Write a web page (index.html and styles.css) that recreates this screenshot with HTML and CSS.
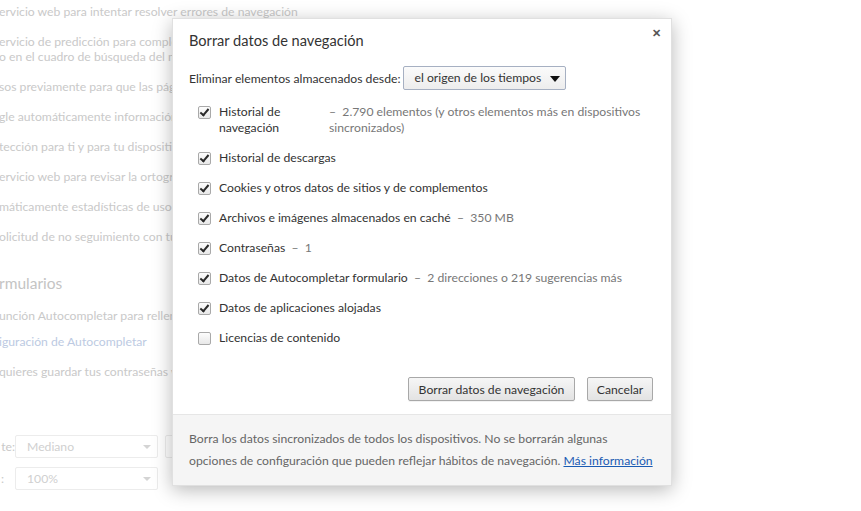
FILE: index.html
```html
<!DOCTYPE html>
<html lang="es">
<head>
    <meta charset="UTF-8">
    <title>Borrar datos de navegación</title>
    <link rel="stylesheet" href="styles.css">
</head>
<body>

    <!-- settings page behind the dialog -->
    <div class="page">
        <div class="item open">ervicio web para intentar resolver errores de navegación</div>
        <div class="item">ervicio de predicción para completar búsquedas y URL escritas<br>o en el cuadro de búsqueda del menú de aplicaciones</div>
        <div class="item">sos previamente para que las páginas se carguen más rápido</div>
        <div class="item">gle automáticamente información de posibles incidentes de seguridad</div>
        <div class="item">tección para ti y para tu dispositivo frente a sitios peligrosos</div>
        <div class="item">ervicio web para revisar la ortografía</div>
        <div class="item">máticamente estadísticas de uso e informes sobre fallos a Google</div>
        <div class="item">olicitud de no seguimiento con tu tráfico de navegación</div>

        <h3 class="section">rmularios</h3>
        <div class="item tight">unción Autocompletar para rellenar formularios web con un solo clic.</div>
        <div class="item"><span class="link">iguración de Autocompletar</span></div>
        <div class="item">quieres guardar tus contraseñas web.</div>

        <div class="select-row first">
            <span class="select-label">te:</span>
            <span class="fake-select">Mediano<span class="arrow"></span></span>
            <span class="fake-btn"></span>
        </div>
        <div class="select-row">
            <span class="select-label left">:</span>
            <span class="fake-select">100%<span class="arrow"></span></span>
        </div>
    </div>

    <div class="dialog">
        <div class="dialog-body">
            <div class="title">Borrar datos de navegación</div>
            <span class="close">&#x2715;</span>

            <div class="period">
                <span>Eliminar elementos almacenados desde:</span>
                <span class="period-select">el origen de los tiempos<span class="caret"></span></span>
            </div>

            <div class="options">
                <div class="option">
                    <span class="check on"></span>
                    <span class="label narrow">Historial de navegación</span>
                    <span class="detail">&ndash;&nbsp; 2.790 elementos (y otros elementos más en dispositivos sincronizados)</span>
                </div>
                <div class="option">
                    <span class="check on"></span>
                    <span class="label">Historial de descargas</span>
                </div>
                <div class="option">
                    <span class="check on"></span>
                    <span class="label">Cookies y otros datos de sitios y de complementos</span>
                </div>
                <div class="option">
                    <span class="check on"></span>
                    <span class="label">Archivos e imágenes almacenados en caché <span class="detail">&nbsp;&ndash;&nbsp; 350 MB</span></span>
                </div>
                <div class="option">
                    <span class="check on"></span>
                    <span class="label">Contraseñas <span class="detail">&nbsp;&ndash;&nbsp; 1</span></span>
                </div>
                <div class="option">
                    <span class="check on"></span>
                    <span class="label">Datos de Autocompletar formulario <span class="detail">&nbsp;&ndash;&nbsp; 2 direcciones o 219 sugerencias más</span></span>
                </div>
                <div class="option">
                    <span class="check on"></span>
                    <span class="label">Datos de aplicaciones alojadas</span>
                </div>
                <div class="option">
                    <span class="check"></span>
                    <span class="label">Licencias de contenido</span>
                </div>
            </div>

            <div class="actions">
                <button class="btn wide">Borrar datos de navegación</button>
                <button class="btn">Cancelar</button>
            </div>
        </div>

        <div class="dialog-footer">
            Borra los datos sincronizados de todos los dispositivos. No se borrarán algunas
            opciones de configuración que pueden reflejar hábitos de navegación. <a href="#">Más información</a>
        </div>
    </div>

</body>
</html>
```

FILE: styles.css
```css
body {
    font-family: 'Segoe UI', Lato, 'Open Sans', sans-serif;
    font-size: 12.2px;
    background-color: #ffffff;
    margin: 0;
    padding: 0;
    width: 861px;
    height: 511px;
    overflow: hidden;
    position: relative;
}

/* background page, cut off by the dialog */
.page {
    color: #c9c9c9;
    padding-top: 4px;
    margin-left: -1px;
    width: 173px;
}

.item {
    line-height: 15px;
    margin-bottom: 15px;
    white-space: nowrap;
    overflow: hidden;
}

.item.open {
    overflow: visible;
}

.item.tight {
    margin-bottom: 11px;
}

.link {
    color: #bccae2;
}

.section {
    font-weight: normal;
    font-size: 15.5px;
    line-height: 20px;
    margin: 29px 0 15px 0;
    color: #c4c4c4;
}

.select-row {
    display: flex;
    align-items: center;
    height: 23px;
    margin-bottom: 9px;
}

.select-row.first {
    margin-top: 56px;
}

.select-label {
    flex: none;
    width: 16px;
    text-align: right;
}

.select-label.left {
    text-align: left;
    padding-left: 2px;
    width: 14px;
}

.fake-select {
    flex: none;
    box-sizing: border-box;
    width: 143px;
    height: 23px;
    border: 1px solid #ececec;
    border-radius: 2px;
    padding: 0 11px;
    line-height: 21px;
    position: relative;
    color: #d0d0d0;
}

.fake-select .arrow {
    position: absolute;
    right: 6px;
    top: 9px;
    border-left: 4px solid transparent;
    border-right: 4px solid transparent;
    border-top: 4px solid #d4d4d4;
}

.fake-btn {
    flex: none;
    width: 16px;
    height: 23px;
    box-sizing: border-box;
    border: 1px solid #ececec;
    border-radius: 2px;
    margin-left: 7px;
}

/* dialog */
.dialog {
    position: absolute;
    left: 172px;
    top: 18px;
    width: 500px;
    height: 468px;
    box-sizing: border-box;
    background-color: #fff;
    border: 1px solid #e0e0e0;
    box-shadow: 0 4px 18px rgba(0, 0, 0, 0.28);
    display: flex;
    flex-direction: column;
    color: #333;
}

.dialog-body {
    flex: 1;
    padding: 12px 18px 0 16px;
    position: relative;
}

.title {
    font-size: 14.6px;
    line-height: 20px;
    color: #333;
}

.close {
    position: absolute;
    right: 10px;
    top: 7px;
    font-size: 11px;
    font-weight: bold;
    color: #555;
}

.period {
    display: flex;
    align-items: center;
    margin-top: 15px;
    gap: 3px;
}

.period-select {
    box-sizing: border-box;
    width: 163px;
    height: 24px;
    line-height: 22px;
    padding-left: 10px;
    border: 1px solid #a6b0c2;
    border-radius: 2px;
    background: linear-gradient(#fbfbfb, #ededed);
    position: relative;
    color: #333;
}

.caret {
    position: absolute;
    right: 5px;
    top: 9px;
    border-left: 5px solid transparent;
    border-right: 5px solid transparent;
    border-top: 6px solid #111;
}

.options {
    margin-top: 14px;
    padding-left: 9px;
}

.option {
    display: flex;
    align-items: flex-start;
    line-height: 16px;
    margin-bottom: 14px;
}

.check {
    box-sizing: border-box;
    flex: none;
    width: 13px;
    height: 13px;
    margin-top: 2px;
    margin-right: 8px;
    border: 1px solid #a9a9a9;
    border-radius: 2px;
    background: linear-gradient(#fdfdfd, #e8e8e8);
    position: relative;
}

.check.on::after {
    content: "";
    position: absolute;
    left: 3px;
    top: 0px;
    width: 3px;
    height: 7px;
    border-right: 2px solid #2a2a2a;
    border-bottom: 2px solid #2a2a2a;
    transform: rotate(40deg);
}

.label.narrow {
    width: 110px;
    flex: none;
}

.detail {
    color: #777;
}

.actions {
    display: flex;
    justify-content: flex-end;
    gap: 12px;
    margin-top: 31px;
}

.btn {
    font-family: inherit;
    font-size: 12.2px;
    color: #333;
    height: 24px;
    width: 66px;
    padding: 0;
    white-space: nowrap;
    border: 1px solid #a8a8a8;
    border-radius: 2px;
    background: linear-gradient(#f6f6f6, #e3e3e3);
    box-shadow: 0 1px 0 rgba(0, 0, 0, 0.05);
}

.btn.wide {
    width: 167px;
}

.dialog-footer {
    background-color: #f5f5f5;
    border-top: 1px solid #e6e6e6;
    padding: 13px 16px 12px 16px;
    line-height: 22px;
    color: #666;
    height: 71px;
    box-sizing: border-box;
}

.dialog-footer a {
    color: #1a5bb3;
}
```
